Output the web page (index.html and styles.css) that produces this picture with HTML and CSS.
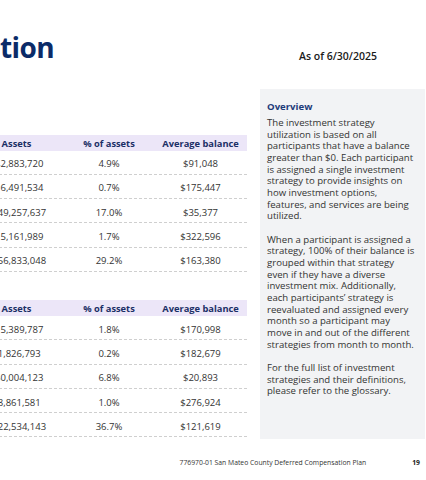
FILE: index.html
```html
<!DOCTYPE html>
<html lang="en">
<head>
<meta charset="utf-8">
<title>Investment strategy utilization</title>
<link rel="stylesheet" href="styles.css">
</head>
<body>
<div class="page">
  <header class="top">
    <h1 class="title">tion</h1>
    <p class="asof">As of 6/30/2025</p>
  </header>
  <main class="main">
    <section class="tables">
      <div class="tbl">
        <div class="row head"><span>Assets</span><span>% of assets</span><span>Average balance</span></div>
        <div class="row"><span>$42,883,720</span><span>4.9%</span><span>$91,048</span></div>
        <div class="row"><span>$16,491,534</span><span>0.7%</span><span>$175,447</span></div>
        <div class="row"><span>$149,257,637</span><span>17.0%</span><span>$35,377</span></div>
        <div class="row"><span>$15,161,989</span><span>1.7%</span><span>$322,596</span></div>
        <div class="row"><span>$256,833,048</span><span>29.2%</span><span>$163,380</span></div>
      </div>
      <div class="tbl second">
        <div class="row head"><span>Assets</span><span>% of assets</span><span>Average balance</span></div>
        <div class="row"><span>$15,389,787</span><span>1.8%</span><span>$170,998</span></div>
        <div class="row"><span>$1,826,793</span><span>0.2%</span><span>$182,679</span></div>
        <div class="row"><span>$60,004,123</span><span>6.8%</span><span>$20,893</span></div>
        <div class="row"><span>$8,861,581</span><span>1.0%</span><span>$276,924</span></div>
        <div class="row"><span>$322,534,143</span><span>36.7%</span><span>$121,619</span></div>
      </div>
    </section>
    <aside class="overview">
      <h2>Overview</h2>
      <p>The investment strategy utilization is based on all participants that have a balance greater than $0. Each participant is assigned a single investment strategy to provide insights on how investment options, features, and services are being utilized.</p>
      <p>When a participant is assigned a strategy, 100% of their balance is grouped within that strategy even if they have a diverse investment mix. Additionally, each participants’ strategy is reevaluated and assigned every month so a participant may move in and out of the different strategies from month to month.</p>
      <p>For the full list of investment strategies and their definitions, please refer to the glossary.</p>
    </aside>
  </main>
  <footer class="foot">
    <span class="plan">776970-01 San Mateo County Deferred Compensation Plan</span>
    <span class="num">19</span>
  </footer>
</div>
</body>
</html>
```

FILE: styles.css
```css
html, body {
  margin: 0;
  padding: 0;
  background: #ffffff;
}
body {
  width: 426px;
  height: 480px;
  overflow: hidden;
  font-family: "Open Sans", "Noto Sans", sans-serif;
  color: #2f2f2f;
}
.page {
  width: 426px;
}
.top {
  display: grid;
  grid-template-columns: 260px 166px;
  height: 89px;
  padding-top: 28px;
  box-sizing: border-box;
}
.title {
  margin: 0;
  font-size: 28px;
  font-weight: 700;
  line-height: normal;
  color: #0b2b68;
  letter-spacing: -0.6px;
}
.asof {
  margin: 0;
  padding: 21px 0 0 39px;
  font-size: 10.5px;
  font-weight: 600;
  color: #1a1a1a;
  line-height: normal;
}
.main {
  display: grid;
  grid-template-columns: 247px 165px;
  column-gap: 13px;
  height: 350px;
}
.tables {
  overflow: hidden;
  padding-top: 46px;
}
.tbl {
  width: 278px;
  margin-left: -31px;
}
.tbl.second {
  margin-top: 28.5px;
}
.row {
  display: grid;
  grid-template-columns: 95px 90px 93px;
  align-items: center;
  text-align: center;
  height: 24.3px;
  box-sizing: border-box;
  border-bottom: 1px dashed #cfcfcf;
  font-size: 9.5px;
  color: #333333;
  padding-top: 3px;
}
.row.head {
  height: 15.5px;
  background: #ece6f8;
  border-bottom: none;
  font-size: 9.3px;
  font-weight: 700;
  color: #1b2f66;
  padding-top: 1.5px;
}
.overview {
  background: #f2f3f5;
  padding: 12px 9px 0 7px;
  font-size: 9.6px;
  line-height: 11.67px;
  color: #333333;
}
.overview h2 {
  margin: 0 0 4px;
  font-size: 9.6px;
  font-weight: 700;
  color: #1d3b7a;
  line-height: 12px;
}
.overview p {
  margin: 0 0 11.67px;
}
.foot {
  display: flex;
  justify-content: flex-end;
  align-items: baseline;
  padding: 19px 6px 0 0;
  font-size: 6.8px;
  color: #333333;
}
.num {
  margin-left: 46px;
  font-weight: 700;
  color: #1a1a1a;
}
```
